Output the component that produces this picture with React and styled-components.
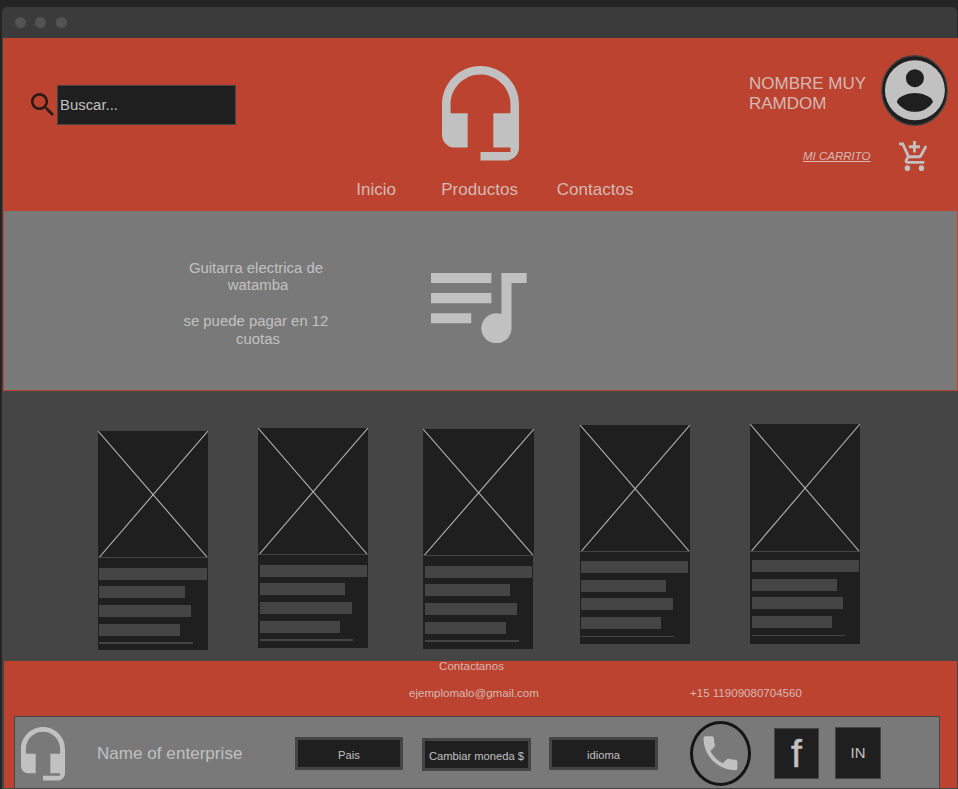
import React from "react";
import styled, { createGlobalStyle } from "styled-components";

const c = {
  page: "#242424",
  chrome: "#3b3b3b",
  dot: "#535353",
  red: "#bb432f",
  gray: "#797979",
  dark: "#454545",
  ink: "#1f1f1f",
  light: "#c1c1c1",
  onRed: "#d6b9b3",
};

const GlobalStyle = createGlobalStyle`
  * { box-sizing: border-box; }
  body {
    margin: 0;
    background: ${c.page};
    font-family: "Liberation Sans", Arial, sans-serif;
    overflow: hidden;
  }
  svg { display: block; flex: none; }
`;

const Window = styled.div`
  width: 956px;
  height: 782px;
  margin: 7px 0 0 2px;
  display: flex;
  flex-direction: column;
`;

const TitleBar = styled.div`
  width: 955px;
  height: 31px;
  display: flex;
  align-items: center;
  gap: 9.4px;
  padding-left: 13px;
  background: ${c.chrome};
  border-radius: 5px 5px 0 0;
`;

const Dot = styled.span`
  width: 11px;
  height: 11px;
  border-radius: 50%;
  background: ${c.dot};
`;

const Content = styled.div`
  height: 751px;
  border-left: 1px solid ${c.dark};
  background: ${c.dark};
`;

const Header = styled.header`
  height: 173px;
  display: grid;
  grid-template-columns: 353px 390px 212px;
  background: ${c.red};
  color: ${c.onRed};
`;

const Search = styled.label`
  display: flex;
  height: 40px;
  margin: 47px 0 0 28px;
  gap: 3px;
  align-items: center;

  svg { margin-bottom: 1px; }
`;

const SearchField = styled.input`
  width: 179px;
  height: 40px;
  padding: 0 0 0 2px;
  border: 1px solid ${c.dark};
  border-radius: 0;
  outline: 0;
  background: ${c.ink};
  font: 14.9px "Liberation Sans", Arial, sans-serif;
  color: ${c.light};
  &::placeholder { color: ${c.light}; opacity: 1; }
`;

const Brand = styled.div`
  padding: 28px 0 0 0;
`;

const BrandMark = styled.div`
  padding-left: 86px;
`;

const Nav = styled.nav`
  display: flex;
  margin-top: 19px;
  padding-left: 0.2px;
  font-size: 17px;
  line-height: 20px;
  letter-spacing: 0.04px;
`;

const NavLink = styled.a`
  white-space: nowrap;
  width: ${(p) => p.$width}px;
`;

const Account = styled.div`
  padding: 17px 0 0 3px;
`;

const Profile = styled.div`
  display: flex;
  height: 71px;
`;

const UserName = styled.div`
  width: 132px;
  padding-top: 19px;
  font-size: 17px;
  line-height: 20px;
  white-space: nowrap;
`;

const Cart = styled.div`
  display: flex;
  margin-top: 15px;
  padding-left: 54px;
`;

const CartLink = styled.a`
  width: 96px;
  padding-top: 8px;
  font-size: 11.5px;
  line-height: 14px;
  font-style: italic;
  text-decoration: underline;
`;

const Banner = styled.section`
  height: 180px;
  display: flex;
  border: solid ${c.red};
  border-width: 0 1px 1px;
  background: ${c.gray};
  color: ${c.light};
`;

const Promo = styled.div`
  width: 180px;
  margin: 49px 83px 0 164px;
  font-size: 14.9px;
  text-align: center;
`;

const PromoText = styled.p`
  margin: 0 0 18px;
  line-height: ${(p) => p.$leading}px;
`;

const BannerArt = styled.div`
  padding-top: 62px;
`;

const Products = styled.section`
  height: 270px;
  display: flex;
  align-items: flex-start;
  background: ${c.dark};
`;

const Card = styled.article`
  width: 110px;
  height: ${(p) => p.$height}px;
  margin: ${(p) => p.$top}px 0 0 ${(p) => p.$left}px;
  background: ${c.ink};
`;

const Picture = styled.div`
  width: ${(p) => p.$width}px;
  height: ${(p) => p.$height}px;
  background: ${c.ink};
  border-bottom: 1px solid ${c.dark};
`;

const Lines = styled.div`
  padding-left: ${(p) => p.$inset}px;
`;

const Line = styled.div`
  width: ${(p) => p.$width}px;
  height: ${(p) => p.$height}px;
  margin-top: ${(p) => p.$gap}px;
  background: ${c.dark};
`;

const Footer = styled.footer`
  height: 128px;
  width: 953px;
  margin-left: 1px;
  background: ${c.red};
  color: ${c.onRed};
  border-bottom: 1px solid ${c.dark};
`;

const Contact = styled.div`
  height: 55px;
  padding-left: 405px;
  font-size: 11.55px;
  line-height: 13px;
`;

const ContactTitle = styled.div`
  width: 125px;
  height: 12px;
  text-align: center;
  line-height: 10px;
`;

const ContactRow = styled.div`
  display: flex;
  margin-top: 14px;
`;

const ContactItem = styled.span`
  flex: none;
  width: 281px;
  white-space: nowrap;
`;

const Panel = styled.div`
  width: 926px;
  height: 72px;
  margin-left: 10px;
  display: flex;
  align-items: flex-start;
  border: 1px solid ${c.dark};
  border-bottom: 0;
  background: ${c.gray};
  color: ${c.light};
`;

const FooterMark = styled.div`
  padding: 10px 0 0 6px;
`;

const Enterprise = styled.div`
  width: 198px;
  margin: 27px 0 0 32px;
  font-size: 17px;
  line-height: 20px;
  letter-spacing: 0.05px;
  white-space: nowrap;
`;

const Option = styled.button`
  flex: none;
  width: ${(p) => p.$width}px;
  height: 33px;
  margin: ${(p) => p.$top}px ${(p) => p.$after}px 0 0;
  padding: 3px 0 0;
  border: 3px solid ${c.dark};
  background: ${c.ink};
  color: ${c.light};
  font: 11.2px/14px "Liberation Sans", Arial, sans-serif;
  white-space: nowrap;
`;

const Call = styled.div`
  width: 61px;
  height: 65px;
  margin: 4px 23px 0 0;
  display: flex;
  align-items: center;
  justify-content: center;
  border: 3px solid #151515;
  border-radius: 50%;
`;

const Social = styled.a`
  width: ${(p) => p.$width}px;
  height: ${(p) => p.$height}px;
  margin: ${(p) => p.$top}px 16px 0 0;
  display: flex;
  align-items: center;
  justify-content: center;
  border: 1px solid ${c.dark};
  background: ${c.ink};
  font-size: ${(p) => p.$size}px;
  line-height: 1;
  -webkit-text-stroke: ${(p) => p.$stroke}px ${c.light};
`;

const paths = {
  search: ["3 3 17.49 17.49", "M15.5 14h-.79l-.28-.27C15.41 12.59 16 11.11 16 9.5 16 5.91 13.09 3 9.5 3S3 5.91 3 9.5 5.91 16 9.5 16c1.61 0 3.09-.59 4.23-1.57l.27.28v.79l5 4.99L20.49 19l-4.99-5zm-6 0C7.01 14 5 11.99 5 9.5S7.01 5 9.5 5 14 7.01 14 9.5 11.99 14 9.5 14z"],
  headset: ["3 1 18 22", "M12 1c-4.97 0-9 4.03-9 9v7c0 1.66 1.34 3 3 3h3v-8H5v-2c0-3.87 3.13-7 7-7s7 3.13 7 7v2h-4v8h4v1h-7v2h6c1.66 0 3-1.34 3-3V10c0-4.97-4.03-9-9-9z"],
  queue: ["3 6 19 14", "M15 6H3v2h12V6zm0 4H3v2h12v-2zM3 16h8v-2H3v2zM17 6v8.18c-.31-.11-.65-.18-1-.18-1.66 0-3 1.34-3 3s1.34 3 3 3 3-1.34 3-3V8h3V6h-5z"],
  cart: ["1 1 20.16 21", "M11 9h2V6h3V4h-3V1h-2v3H8v2h3v3zm-4 9c-1.1 0-1.99.9-1.99 2S5.9 22 7 22s2-.9 2-2-.9-2-2-2zm10 0c-1.1 0-1.99.9-1.99 2s.89 2 1.99 2 2-.9 2-2-.9-2-2-2zm-9.83-3.25l.03-.12.9-1.63h7.45c.75 0 1.41-.41 1.75-1.03l3.86-7.01L19.42 4h-.01l-1.1 2-2.76 5H8.53l-.13-.27L6.16 6l-.95-2-.94-2H1v2h2l3.6 7.59-1.35 2.45c-.16.28-.25.61-.25.96 0 1.1.9 2 2 2h12v-2H7.42c-.13 0-.25-.11-.25-.25z"],
  phone: ["3 3 18 18", "M6.62 10.79c1.44 2.83 3.76 5.14 6.59 6.59l2.2-2.2c.27-.27.67-.36 1.02-.24 1.12.37 2.33.57 3.57.57.55 0 1 .45 1 1V20c0 .55-.45 1-1 1-9.39 0-17-7.61-17-17 0-.55.45-1 1-1h3.5c.55 0 1 .45 1 1 0 1.25.2 2.45.57 3.57.11.35.03.74-.25 1.02l-2.2 2.2z"],
};

const Icon = ({ name, width, height, color = c.light }) => (
  <svg width={width} height={height} viewBox={paths[name][0]} preserveAspectRatio="none" fill={color}>
    <path d={paths[name][1]} />
  </svg>
);

const PhoneIcon = () => (
  <svg width="35" height="35" viewBox="0 0 35 35" fill={c.light}>
    <path transform="translate(-5.1 -5.3) scale(1.88)" d={paths.phone[1]} />
  </svg>
);

const Avatar = () => (
  <svg width="67" height="71" viewBox="0 0 67 71">
    <ellipse cx="33.5" cy="35.5" rx="32.8" ry="34.8" fill={c.ink} stroke={c.dark} strokeWidth="1.2" />
    <circle cx="33.9" cy="35.2" r="30" fill={c.light} />
    <circle cx="33.9" cy="23.2" r="9" fill={c.ink} />
    <path
      transform="translate(-2.1 -0.8) scale(3)"
      d="M12 19.2c-2.5 0-4.71-1.28-6-3.22.03-1.99 4-3.08 6-3.08 1.99 0 5.97 1.09 6 3.08-1.29 1.94-3.5 3.22-6 3.22z"
      fill={c.ink}
    />
  </svg>
);

/* Each line is [gap above, width, height]. */
const cards = [
  { left: 95, top: 40, height: 219, pic: 126, width: 110, inset: 1,
    lines: [[10, 108, 12], [6, 86, 12], [7, 92, 12], [7, 81, 12], [6, 94, 2]] },
  { left: 50, top: 37, height: 220, pic: 126, width: 110, inset: 2,
    lines: [[10, 107, 12], [6, 85, 12], [7, 92, 12], [7, 80, 12], [6, 93, 2]] },
  { left: 55, top: 38, height: 220, pic: 126, width: 111, inset: 2,
    lines: [[10, 107, 12], [6, 85, 12], [7, 92, 12], [7, 81, 12], [6, 94, 2]] },
  { left: 47, top: 34, height: 219, pic: 126, width: 110, inset: 1,
    lines: [[9, 107, 12], [7, 85, 12], [6, 92, 12], [7, 80, 12], [7, 93, 1]] },
  { left: 60, top: 33, height: 220, pic: 127, width: 110, inset: 2,
    lines: [[8, 107, 12], [7, 85, 12], [6, 91, 12], [7, 80, 12], [7, 93, 1]] },
];

const ProductCard = ({ card }) => (
  <Card $left={card.left} $top={card.top} $height={card.height}>
    <Picture $width={card.width} $height={card.pic + 1}>
      <svg width={card.width} height={card.pic} fill="none" stroke="#b4b4b4" strokeWidth="1.1">
        <path d={`M0 0L${card.width - 1} ${card.pic}M${card.width} 0L1.5 ${card.pic}`} />
      </svg>
    </Picture>
    <Lines $inset={card.inset}>
      {card.lines.map(([gap, width, height], i) => (
        <Line key={i} $gap={gap} $width={width} $height={height} />
      ))}
    </Lines>
  </Card>
);

export default function App() {
  return (
    <>
      <GlobalStyle />
      <Window>
        <TitleBar>
          <Dot />
          <Dot />
          <Dot />
        </TitleBar>
        <Content>
          <Header>
            <Search>
              <Icon name="search" width={23} height={23} color="#2b1a17" />
              <SearchField placeholder="Buscar..." />
            </Search>
            <Brand>
              <BrandMark>
                <Icon name="headset" width={77} height={94.5} />
              </BrandMark>
              <Nav>
                <NavLink $width={85}>Inicio</NavLink>
                <NavLink $width={115.5}>Productos</NavLink>
                <NavLink $width={90}>Contactos</NavLink>
              </Nav>
            </Brand>
            <Account>
              <Profile>
                <UserName>
                  NOMBRE MUY
                  <br />
                  RAMDOM
                </UserName>
                <Avatar />
              </Profile>
              <Cart>
                <CartLink>MI CARRITO</CartLink>
                <Icon name="cart" width={28.3} height={30} />
              </Cart>
            </Account>
          </Header>
          <Banner>
            <Promo>
              <PromoText $leading={17}>
                Guitarra electrica de{"\u00a0"}
                <br />
                watamba
              </PromoText>
              <PromoText $leading={18}>
                se puede pagar en 12{"\u00a0"}
                <br />
                cuotas
              </PromoText>
            </Promo>
            <BannerArt>
              <Icon name="queue" width={95.6} height={70.3} />
            </BannerArt>
          </Banner>
          <Products>
            {cards.map((card) => (
              <ProductCard key={card.left} card={card} />
            ))}
          </Products>
          <Footer>
            <Contact>
              <ContactTitle>Contactanos</ContactTitle>
              <ContactRow>
                <ContactItem>ejemplomalo@gmail.com</ContactItem>
                <ContactItem>+15 11909080704560</ContactItem>
              </ContactRow>
            </Contact>
            <Panel>
              <FooterMark>
                <Icon name="headset" width={44} height={53.5} />
              </FooterMark>
              <Enterprise>Name of enterprise</Enterprise>
              <Option $width={108} $top={20} $after={19}>Pais</Option>
              <Option $width={109} $top={21} $after={18}>Cambiar moneda $</Option>
              <Option $width={109} $top={20} $after={32}>idioma</Option>
              <Call>
                <PhoneIcon />
              </Call>
              <Social $width={45} $height={51} $top={11} $size={39} $stroke={0.5}>f</Social>
              <Social $width={46} $height={52} $top={10} $size={14.9} $stroke={0}>IN</Social>
            </Panel>
          </Footer>
        </Content>
      </Window>
    </>
  );
}
